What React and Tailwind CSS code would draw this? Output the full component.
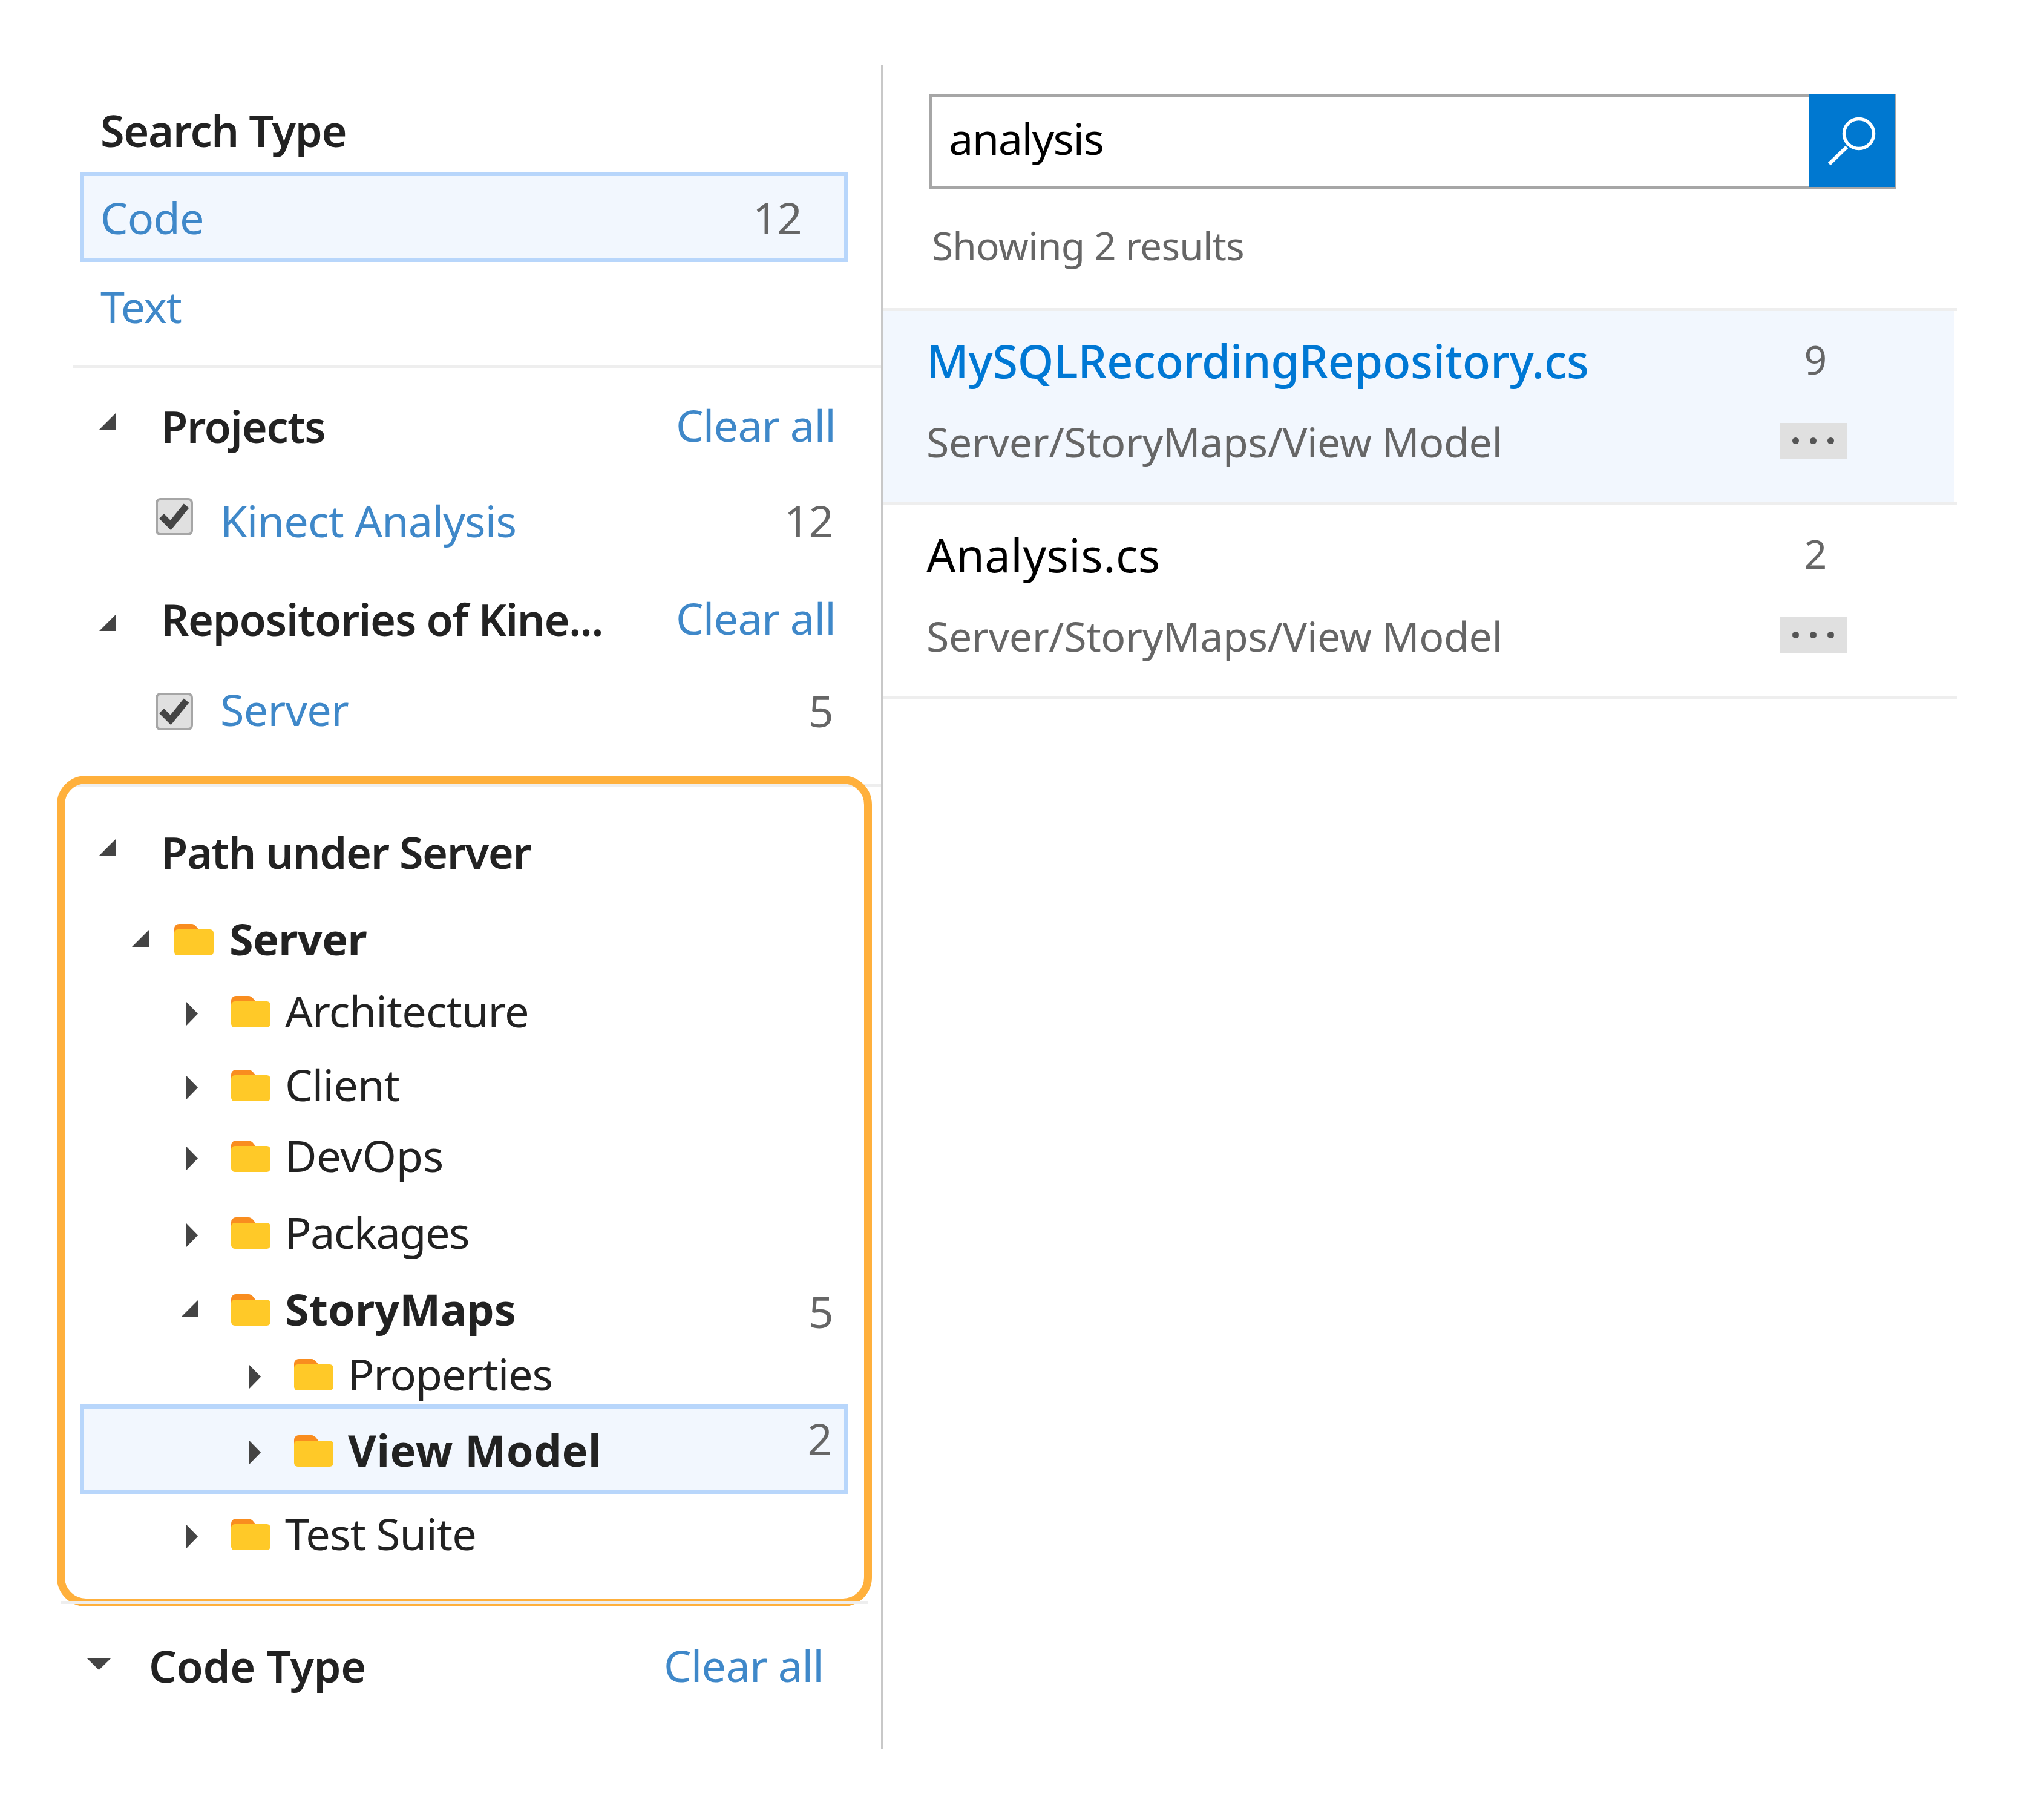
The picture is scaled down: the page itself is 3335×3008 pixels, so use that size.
const link = 'text-[#3f88c9]';
const count = 'text-[#666666]';

function Folder() {
  return (
    <svg width="65" height="52" viewBox="0 0 65 52" className="shrink-0 mt-[4px]">
      <path d="M0 18V8a8 8 0 0 1 8-8h20c4 0 7 2 9 5l4 5v8z" fill="#f98d1f" />
      <rect x="0" y="9" width="65" height="43" rx="6" fill="#ffc928" />
    </svg>
  );
}

function ArrowOpen({ className = '' }) {
  return (
    <svg width="28" height="28" viewBox="0 0 28 28" className={'shrink-0 ' + className}>
      <polygon points="28,0 28,28 0,28" fill="#444444" />
    </svg>
  );
}

function ArrowRight() {
  return (
    <svg width="19" height="39" viewBox="0 0 19 39" className="shrink-0 mt-[10px]">
      <polygon points="0,0 19,19.5 0,39" fill="#444444" />
    </svg>
  );
}

function Check({ className = '' }) {
  return (
    <div className={'w-[62px] h-[62px] shrink-0 rounded-[8px] border-[4px] border-[#a6a6a6] bg-[#e0e0e0] flex items-center justify-center ' + className}>
      <svg width="54" height="54" viewBox="0 0 54 54">
        <polyline points="6,26 21,41 47,9" fill="none" stroke="#444444" strokeWidth="11" />
      </svg>
    </div>
  );
}

function Divider({ className = '' }) {
  return <div className={'bg-[#eeeeee] ' + className} />;
}

function FacetHead({ title, className, arrowClass = 'mb-[16px]' }) {
  return (
    <div className={'flex items-center pl-[164px] pr-[75px] ' + className}>
      <ArrowOpen className={arrowClass} />
      <span className="ml-[74px] font-semibold tracking-[-1.3px] text-[#222222]">{title}</span>
      <span className={'ml-auto mb-[4px] ' + link}>Clear all</span>
    </div>
  );
}

function FacetItem({ label, n, className, checkClass, nClass = '' }) {
  return (
    <div className={'flex items-center pl-[257px] pr-[79px] ' + className}>
      <Check className={checkClass} />
      <span className={'ml-[45px] ' + link}>{label}</span>
      <span className={'ml-auto ' + count + ' ' + nClass}>{n}</span>
    </div>
  );
}

function TreeRow({ bold, label, n, nClass = '', labelClass = '', className, arrow }) {
  return (
    <div className={'flex items-center ' + className}>
      <div className="w-[74px] flex justify-end shrink-0 mr-[55px]">{arrow}</div>
      <Folder />
      <span className={'ml-[24px] text-[#222222] ' + (bold ? 'font-bold ' : '') + labelClass}>{label}</span>
      {n && <span className={'ml-auto font-normal ' + count + ' ' + nClass}>{n}</span>}
    </div>
  );
}

function Result({ name, n, className, nameClass }) {
  return (
    <div className={'h-[316px] pl-[71px] ' + className}>
      <div className="h-[163px] flex items-center">
        <span className={'text-[76px] ' + nameClass}>{name}</span>
        <span className={'ml-auto w-[111px] pl-[7px] text-center text-[66px] mb-[5px] ' + count}>{n}</span>
      </div>
      <div className="flex items-center h-[106px]">
        <span className={'text-[68px] tracking-[-0.4px] ' + count}>Server/StoryMaps/View Model</span>
        <div className="ml-auto w-[111px] h-[60px] mb-[3px] bg-[#e0e0e0] flex items-center justify-center gap-[18px]">
          <span className="w-[11px] h-[11px] rounded-full bg-[#555555]" />
          <span className="w-[11px] h-[11px] rounded-full bg-[#555555]" />
          <span className="w-[11px] h-[11px] rounded-full bg-[#555555]" />
        </div>
      </div>
    </div>
  );
}

export default function App() {
  return (
    <div className="relative w-[3335px] h-[3008px] bg-white flex items-start text-[72px] tracking-[-0.8px] font-['Noto_Sans',sans-serif] leading-none overflow-hidden">
      {/* left: facets */}
      <div className="w-[1456px] h-[2784px] mt-[107px] shrink-0">
        <div className="h-[177px] pt-[38px] pl-[166px] flex items-center font-semibold tracking-[-1.3px] text-[#222222]">Search Type</div>
        <div className="ml-[132px] w-[1270px] h-[149px] border-[7px] border-[#b8d6fb] bg-[#f2f7fe] flex items-center pl-[27px] pr-[70px]">
          <span className={link}>Code</span>
          <span className={'ml-auto ' + count}>12</span>
        </div>
        <div className={'h-[146px] pl-[166px] flex items-center tracking-[-1.2px] ' + link}>Text</div>
        <Divider className="mt-[25px] h-[4px] ml-[121px]" />

        <FacetHead title="Projects" className="h-[192px]" />
        <FacetItem label="Kinect Analysis" n="12" checkClass="mb-[13px]" className="h-[120px]" />
        <FacetHead title="Repositories of Kine..." arrowClass="mt-[12px]" className="h-[206px]" />
        <FacetItem label="Server" n="5" checkClass="mt-[7px]" nClass="mt-[4px]" className="h-[92px]" />
        <Divider className="mt-[77px] h-[5px] ml-[121px]" />

        <div className="h-[216px] flex items-center pl-[164px]">
          <ArrowOpen className="mb-[16px]" />
          <span className="ml-[74px] font-semibold tracking-[-1.4px] text-[#222222]">Path under Server</span>
        </div>
        <div className="pl-[218px] h-[70px] flex items-center">
          <ArrowOpen />
          <div className="ml-[42px]"><Folder /></div>
          <span className="ml-[26px] font-bold tracking-[-0.7px] text-[#222222]">Server</span>
        </div>

        <TreeRow label="Architecture" arrow={<ArrowRight />} className="mt-[24px] h-[120px] pl-[253px]" />
        <TreeRow label="Client" arrow={<ArrowRight />} className="h-[124px] pl-[253px]" />
        <TreeRow label="DevOps" labelClass="tracking-[-0.2px]" arrow={<ArrowRight />} className="h-[110px] pl-[253px]" />
        <TreeRow label="Packages" labelClass="tracking-[-1.6px]" arrow={<ArrowRight />} className="h-[144px] pl-[253px]" />
        <TreeRow bold label="StoryMaps" labelClass="tracking-[0px]" n="5" nClass="mt-[8px]" arrow={<ArrowOpen />} className="h-[110px] pl-[253px] pr-[79px]" />
        <TreeRow label="Properties" labelClass="tracking-[-1.2px]" arrow={<ArrowRight />} className="mt-[1px] h-[102px] pl-[357px]" />
        <div className="ml-[132px] w-[1270px] h-[149px] border-[7px] border-[#b8d6fb] bg-[#f2f7fe]">
          <TreeRow bold label="View Model" labelClass="tracking-[0.6px]" n="2" nClass="mb-[38px]" arrow={<ArrowRight />} className="h-full pl-[218px] pr-[20px]" />
        </div>
        <TreeRow label="Test Suite" arrow={<ArrowRight />} className="h-[128px] pl-[253px]" />
        <Divider className="relative z-10 mt-[48px] h-[5px] ml-[100px] mr-[22px]" />

        <div className="h-[204px] flex items-center pl-[144px] pr-[95px]">
          <svg width="39" height="19" viewBox="0 0 39 19" className="shrink-0 mb-[6px]">
            <polygon points="0,0 39,0 19.5,19" fill="#444444" />
          </svg>
          <span className="ml-[63px] font-semibold tracking-[-0.4px] text-[#222222]">Code Type</span>
          <span className={'ml-auto mb-[2px] ' + link}>Clear all</span>
        </div>
      </div>

      <div className="w-[4px] h-[2784px] mt-[107px] bg-[#c8c8c8] shrink-0" />

      {/* right: results */}
      <div className="w-[1774px] shrink-0">
        <div className="mt-[155px] ml-[76px] w-[1598px] h-[157px] border-[5px] border-[#a6a6a6] flex">
          <div className="flex-1 flex items-center pl-[27px] pb-[12px] tracking-[-1.6px] text-black">analysis</div>
          <div className="w-[142px] -mt-[4px] -mb-[2px] -mr-[3px] bg-[#0078d0]">
            <svg width="142" height="153" viewBox="0 0 142 153" className="block">
              <circle cx="82" cy="65" r="24.5" fill="none" stroke="#ffffff" strokeWidth="5.5" />
              <line x1="62" y1="87" x2="33" y2="115" stroke="#ffffff" strokeWidth="6" />
            </svg>
          </div>
        </div>
        <div className={'mt-[61px] ml-[80px] h-[66px] flex items-center text-[64px] tracking-[-0.8px] ' + count}>Showing 2 results</div>
        <div className="mt-[70px] w-[1774px]">
          <Divider className="h-[5px]" />
          <Result name="MySQLRecordingRepository.cs" n="9" nameClass="font-medium tracking-[-0.3px] text-[#0078d4]" className="bg-[#f2f7fe] w-[1770px] pr-[178px]" />
          <Divider className="h-[5px]" />
          <Result name="Analysis.cs" n="2" nameClass="tracking-[0.4px] text-black" className="pr-[182px]" />
          <Divider className="h-[5px]" />
        </div>
      </div>

      {/* highlight drawn over the path facet */}
      <div className="absolute left-[94px] top-[1282px] w-[1347px] h-[1373px] rounded-[48px] border-[13px] border-[#ffb03c] pointer-events-none" />
    </div>
  );
}
